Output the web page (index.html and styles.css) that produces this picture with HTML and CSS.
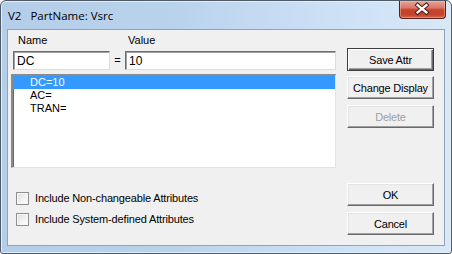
FILE: index.html
```html
<!DOCTYPE html>
<html>
<head>
<meta charset="utf-8">
<link rel="stylesheet" href="styles.css">
</head>
<body>
<div class="window">
  <div class="titlebar">
    <span class="title">V2&nbsp;&nbsp;&nbsp;PartName: Vsrc</span>
    <div class="close">
      <svg width="47" height="18" viewBox="0 0 47 18">
        <path d="M19 5 L28 12.5 M28 5 L19 12.5" stroke="#4a1f1a" stroke-width="4.4" stroke-linecap="square"/>
        <path d="M19 5 L28 12.5 M28 5 L19 12.5" stroke="#ffffff" stroke-width="2.4" stroke-linecap="square"/>
      </svg>
    </div>
  </div>
  <div class="client">
    <div class="left">
      <div class="labels">
        <span class="lbl-name">Name</span>
        <span class="lbl-value">Value</span>
      </div>
      <div class="inputs">
        <div class="textbox name-box">DC</div>
        <span class="eq">=</span>
        <div class="textbox value-box">10</div>
      </div>
      <div class="listbox">
        <div class="item selected">DC=10</div>
        <div class="item">AC=</div>
        <div class="item">TRAN=</div>
      </div>
      <div class="checks">
        <label class="check"><span class="box"></span>Include Non-changeable Attributes</label>
        <label class="check"><span class="box"></span>Include System-defined Attributes</label>
      </div>
    </div>
    <div class="right">
      <div class="btn default b-save">Save Attr</div>
      <div class="btn b-change">Change Display</div>
      <div class="btn disabled b-delete">Delete</div>
      <div class="btn b-ok">OK</div>
      <div class="btn b-cancel">Cancel</div>
    </div>
  </div>
</div>
</body>
</html>
```

FILE: styles.css
```css
html, body {
  margin: 0;
  padding: 0;
  background: #ffffff;
}
.window {
  width: 452px;
  height: 254px;
  box-sizing: border-box;
  border: 1px solid #4f5a66;
  border-radius: 6px 6px 3px 3px;
  padding: 0 6px 7px 6px;
  display: flex;
  flex-direction: column;
  background: linear-gradient(90deg, #b4cde8 0%, #bad3ed 40%, #cde1f6 75%, #d9e8f7 100%);
  box-shadow: inset 0 0 0 1px #e4eef9;
}
.titlebar {
  height: 28px;
  margin: 0 -6px;
  display: flex;
  align-items: center;
  justify-content: space-between;
  padding-left: 7px;
  padding-right: 5px;
}
.title {
  font-family: "Open Sans", "Noto Sans", sans-serif;
  font-size: 11.5px;
  color: #000000;
  margin-top: 1px;
  white-space: pre;
}
.close {
  align-self: flex-start;
  width: 47px;
  height: 18px;
  box-sizing: border-box;
  border: 1px solid #4e231d;
  border-top: none;
  border-radius: 0 0 4px 4px;
  background: linear-gradient(180deg, #e7a494 0%, #d9786a 40%, #c4432c 52%, #c5432b 80%, #d8664a 100%);
  box-shadow: inset 0 0 0 1px rgba(255, 210, 200, 0.4);
  display: flex;
}
.close svg {
  margin: -1px 0 0 -1px;
}
.client {
  flex: 1;
  border: 1px solid #8ea4bd;
  background: #f0f0f0;
  display: flex;
  font-family: "Liberation Sans", Arial, sans-serif;
  font-size: 11px;
  color: #000000;
}
.left {
  margin-left: 3px;
  width: 325px;
  display: flex;
  flex-direction: column;
}
.labels {
  margin-top: 4px;
  height: 13px;
  line-height: 13px;
  display: flex;
}
.lbl-name {
  margin-left: 7px;
  width: 110px;
}
.inputs {
  margin-top: 4px;
  height: 19px;
  display: flex;
  align-items: stretch;
}
.textbox {
  box-sizing: border-box;
  height: 19px;
  background: #ffffff;
  border-top: 1px solid #6d6d6d;
  border-left: 1px solid #6d6d6d;
  border-right: 1px solid #dcdcdc;
  border-bottom: 1px solid #dcdcdc;
  box-shadow: inset 1px 1px 0 #a0a0a0;
  padding: 2px 0 0 3px;
  line-height: 14px;
  font-size: 12px;
}
.name-box {
  margin-left: 2px;
  width: 97px;
}
.eq {
  width: 15px;
  text-align: center;
  line-height: 19px;
}
.value-box {
  width: 211px;
}
.listbox {
  margin-top: 4px;
  height: 94px;
  box-sizing: border-box;
  background: #ffffff;
  border-top: 2px solid #8a8a8a;
  border-left: 2px solid #8a8a8a;
  border-right: 1px solid #e3e3e3;
  border-bottom: 1px solid #e3e3e3;
  box-shadow: inset 1px 1px 0 #696969;
}
.item {
  height: 13px;
  line-height: 13px;
  padding-left: 17px;
  font-size: 11px;
}
.item.selected {
  background: #3399ff;
  color: #ffffff;
}
.checks {
  margin-top: 24px;
  display: flex;
  flex-direction: column;
  gap: 8px;
}
.check {
  display: flex;
  align-items: center;
  height: 13px;
  line-height: 13px;
  letter-spacing: -0.15px;
}
.box {
  width: 13px;
  height: 13px;
  box-sizing: border-box;
  margin-left: 5px;
  margin-right: 6px;
  border: 1px solid #8f8f8f;
  background: linear-gradient(135deg, #dcdcdc 0%, #f4f4f4 60%, #ffffff 100%);
  box-shadow: inset 0 0 0 1px #f7f7f7;
}
.right {
  margin-left: 11px;
  width: 87px;
  display: flex;
  flex-direction: column;
}
.btn {
  height: 23px;
  box-sizing: border-box;
  display: flex;
  align-items: center;
  justify-content: center;
  background: #f0f0f0;
  border-top: 1px solid #ffffff;
  border-left: 1px solid #ffffff;
  border-right: 1px solid #696969;
  border-bottom: 1px solid #696969;
  box-shadow: inset -1px -1px 0 #a0a0a0, inset 1px 1px 0 #e3e3e3;
  font-size: 11px;
  letter-spacing: -0.2px;
  white-space: nowrap;
}
.btn.default {
  border: 1px solid #3c3c3c;
  box-shadow: inset 1px 1px 0 #ffffff, inset -1px -1px 0 #696969, inset -2px -2px 0 #a0a0a0;
}
.btn.disabled {
  color: #a0a0a0;
}
.b-save { margin-top: 18px; }
.b-change { margin-top: 5px; }
.b-delete { margin-top: 6px; }
.b-ok { margin-top: 55px; }
.b-cancel { margin-top: 6px; }
```
